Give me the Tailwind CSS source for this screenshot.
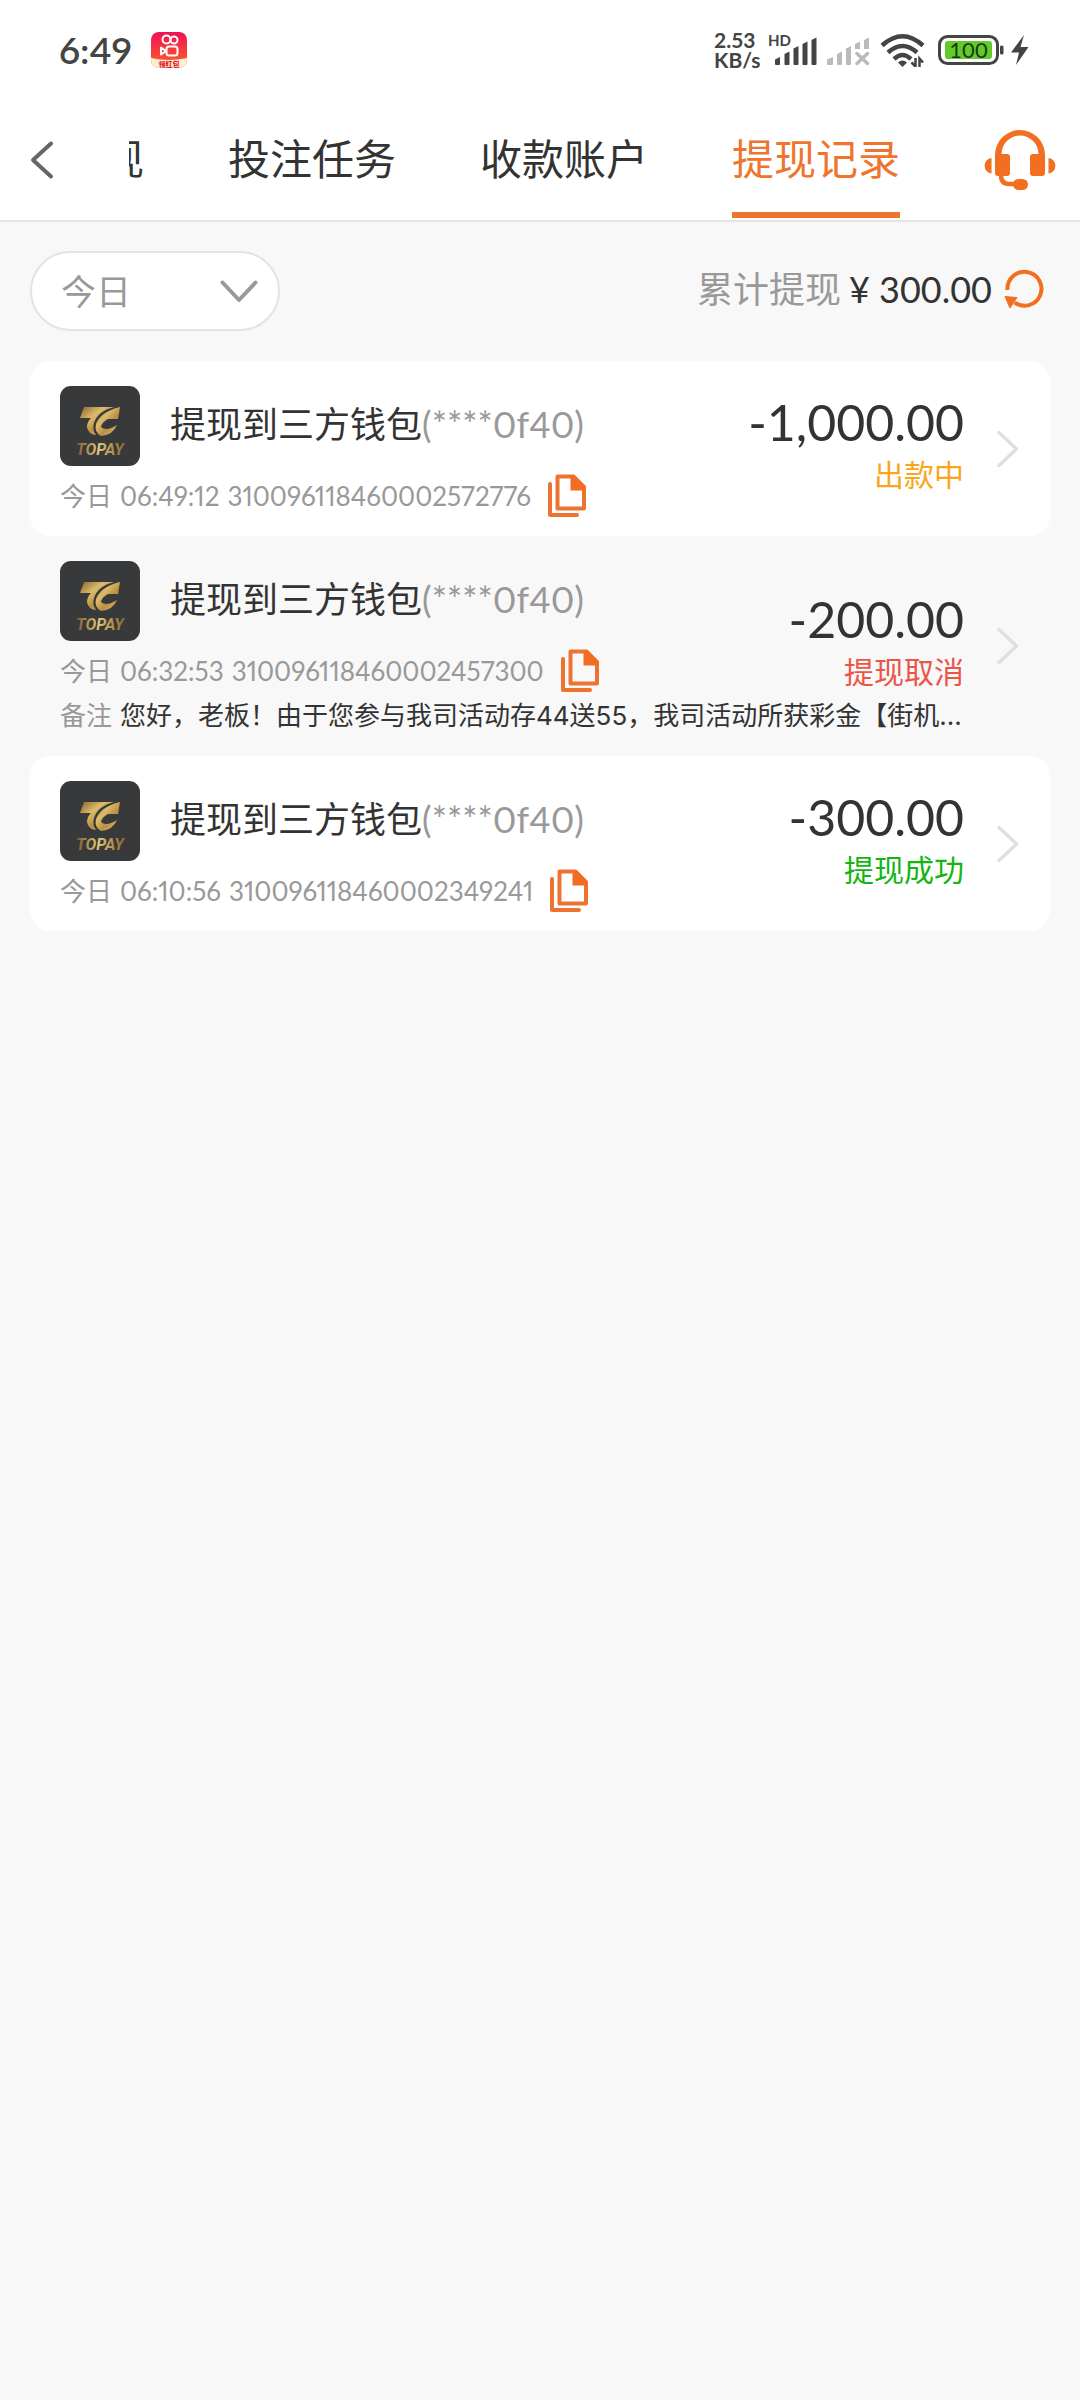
<!DOCTYPE html>
<html lang="zh-CN">
<head>
<meta charset="utf-8">
<meta name="viewport" content="width=device-width, initial-scale=1">
<title>提现记录</title>
<script src="https://cdn.jsdelivr.net/npm/@tailwindcss/browser@4"></script>
</head>
<body class="min-h-screen bg-[#f8f8f8] font-[Lato,'Noto_Sans_CJK_SC',sans-serif] text-[#333]">

<!-- Shared symbols -->
<svg class="absolute h-0 w-0" aria-hidden="true">
  <defs>
    <linearGradient id="gold" x1="0" y1="0" x2="1" y2="1">
      <stop offset="0" stop-color="#8a6428"/><stop offset=".35" stop-color="#dcbc6c"/><stop offset=".6" stop-color="#b98f43"/><stop offset="1" stop-color="#e6c878"/>
    </linearGradient>
    <linearGradient id="goldText" x1="0" y1="0" x2="1" y2="0">
      <stop offset="0" stop-color="#7d5a2c"/><stop offset=".45" stop-color="#e2c476"/><stop offset="1" stop-color="#8a6430"/>
    </linearGradient>
    <linearGradient id="red" x1="0" y1="0" x2="0" y2="1">
      <stop offset="0" stop-color="#ee1156"/><stop offset=".8" stop-color="#fb5430"/>
    </linearGradient>
  </defs>
  <symbol id="copy" viewBox="0 0 40 44">
    <path d="M3 10v31h27" fill="none" stroke="#ec7430" stroke-width="4" stroke-linecap="round" stroke-linejoin="round"/>
    <path d="M10.500 2.500h16l10.500 10.500v21.500h-26.500z" fill="none" stroke="#ec7430" stroke-width="4" stroke-linejoin="round"/>
    <path d="M23.500 1.500h4L38.500 12.500v4h-15z" fill="#f26d21"/>
  </symbol>
  <symbol id="next" viewBox="0 0 24 40">
    <path d="M3 3.500 20.500 20 3 36.500" fill="none" stroke="#dfdfdf" stroke-width="3.500" stroke-linecap="round" stroke-linejoin="round"/>
  </symbol>
</svg>

<header class="bg-white">
  <div class="flex h-[100px] items-center justify-between pr-[50px] pl-[59px]">
    <div class="flex items-center gap-[19px]">
      <span class="text-[37px] leading-[40px] font-semibold text-[#444] proportional-nums">6:49</span>
      <svg class="h-9 w-9" viewBox="0 0 36 36" role="img" aria-label="快手">
        <clipPath id="app"><rect width="36" height="36" rx="8"/></clipPath>
        <g clip-path="url(#app)">
          <rect width="36" height="36" fill="url(#red)"/>
          <path d="M0 26q18 4 36 0v10H0z" fill="#fdeed2"/>
          <text x="18" y="34.500" text-anchor="middle" font-size="7" font-weight="900" fill="#e0202c">领红包</text>
        </g>
        <g fill="none" stroke="#fff" stroke-width="2"><circle cx="15.500" cy="7.500" r="4"/><circle cx="23" cy="8" r="3.500"/><rect x="15.500" y="14.500" width="11" height="9" rx="2.500"/><path d="M15 19l-5-3.500v7z" stroke-linejoin="round"/></g>
      </svg>
    </div>
    <div class="flex items-center text-[#444]">
      <div class="w-[54px] text-[21px] leading-[20px] font-bold"><div>2.53</div><div>KB/s</div></div>
      <svg class="h-8 w-[50px] overflow-visible" viewBox="0 0 50 32" role="img" aria-label="HD 信号">
        <text x="0" y="12" font-size="15" font-weight="700" fill="#444">HD</text>
        <g fill="#444"><path d="M7 30v-4.500l5-2.500v7a1 1 0 0 1-1 1H8a1 1 0 0 1-1-1zM16.500 30V20l5-2.500V30a1 1 0 0 1-1 1h-3a1 1 0 0 1-1-1zM25.500 30V14.500l5-2.500v18a1 1 0 0 1-1 1h-3a1 1 0 0 1-1-1zM34.500 30V10l5-2.500V30a1 1 0 0 1-1 1h-3a1 1 0 0 1-1-1zM43.500 30V6l5-2.500V30a1 1 0 0 1-1 1h-3a1 1 0 0 1-1-1z"/></g>
      </svg>
      <svg class="ml-2 h-8 w-[46px]" viewBox="0 0 46 32" role="img" aria-label="无信号">
        <g fill="#bababa"><path d="M1 30v-4.500l6-2.500v7a1 1 0 0 1-1 1H2a1 1 0 0 1-1-1zM11 30V20l5-2.500V30a1 1 0 0 1-1 1h-3a1 1 0 0 1-1-1zM20 30V14.500l5-2.500v18a1 1 0 0 1-1 1h-3a1 1 0 0 1-1-1zM29 15V10l5-2.500V15zM38 15V6l5-2.500V15z"/></g>
        <path d="M31 19.500l10.500 10M41.500 19.500 31 29.500" stroke="#bababa" stroke-width="3.500" stroke-linecap="round"/>
      </svg>
      <svg class="ml-2 h-[34px] w-[46px]" viewBox="0 0 46 34" role="img" aria-label="Wi-Fi">
        <g fill="none" stroke="#444" stroke-width="4.500"><path d="M2 12.500Q22.500-6 43 12.500"/><path d="M8 19.500q14.500-13 29 0"/><path d="M14 26q8.500-8 17 0"/></g>
        <path d="M18 29.500q4.500-4 9 0l-4.500 4.500z" fill="#444"/>
        <path d="M35.500 25v8.500l-4-4M39.500 34V25.500l3.500 4" fill="none" stroke="#444" stroke-width="2.500"/>
      </svg>
      <svg class="ml-3 h-[30px] w-[92px]" viewBox="0 0 92 30" role="img" aria-label="电量 100，充电中">
        <rect x="1.500" y="1.500" width="58" height="27" rx="8" fill="none" stroke="#444" stroke-width="3"/>
        <rect x="7" y="6" width="47" height="18" rx="3" fill="#62cb2b"/>
        <rect x="62" y="10.500" width="3.500" height="9" rx="1.500" fill="#444"/>
        <text x="30.500" y="23" text-anchor="middle" font-size="22" fill="#1d3b12">100</text>
        <path d="M86 0 73 17.500h8L78 30 90.500 12h-8z" fill="#444"/>
      </svg>
    </div>
  </div>

  <div class="flex h-[122px] items-center border-b-2 border-[#e4e4e4] pr-6">
    <button type="button" class="flex h-full w-[129px] shrink-0 items-center pl-[30px]" aria-label="返回">
      <svg class="h-10 w-6" viewBox="0 0 24 40"><path d="M21 3.500 3 20l18 16.500" fill="none" stroke="#666" stroke-width="4" stroke-linecap="round" stroke-linejoin="round"/></svg>
    </button>
    <nav class="flex min-w-0 flex-1 justify-end gap-[84px] overflow-hidden text-[42px]">
      <a href="#" class="flex h-[116px] shrink-0 items-center border-b-6 border-transparent pt-1">提现</a>
      <a href="#" class="flex h-[116px] shrink-0 items-center border-b-6 border-transparent pt-1">投注任务</a>
      <a href="#" class="flex h-[116px] shrink-0 items-center border-b-6 border-transparent pt-1">收款账户</a>
      <a href="#" aria-current="page" class="flex h-[116px] shrink-0 items-center border-b-6 border-[#ee752d] pt-1 text-[#ee752d]">提现记录</a>
    </nav>
    <button type="button" class="ml-[84px] shrink-0" aria-label="客服">
      <svg class="h-[62px] w-[72px]" viewBox="0 0 72 62" fill="#f26f21">
        <path d="M11 26a25 25 0 0 1 50 0v18a3 3 0 0 1-3 3H49a3 3 0 0 1-3-3V28a3 3 0 0 1 3-3h5.500a18.500 18.500 0 0 0-37 0H23a3 3 0 0 1 3 3v16a3 3 0 0 1-3 3H14a3 3 0 0 1-3-3z"/>
        <path d="M7.500 29v15.500a7.800 7.800 0 0 1 0-15.500zM64.500 29v15.500a7.800 7.800 0 0 0 0-15.500z"/>
        <path d="M17 46q0 9 8 9h8" fill="none" stroke="#f26f21" stroke-width="4.500"/>
        <rect x="29" y="50" width="15" height="11" rx="5.500"/>
      </svg>
    </button>
  </div>
</header>

<main class="px-[30px] pt-[29px]">
  <div class="mb-[30px] flex items-center justify-between">
    <div class="relative">
      <select aria-label="日期" class="block h-20 w-[250px] appearance-none rounded-full border-2 border-[#e3e3e3] bg-white pl-[29px] text-[35px] text-[#999]">
        <option>今日</option>
      </select>
      <svg class="pointer-events-none absolute top-7 right-[21px] h-6 w-10" viewBox="0 0 40 24"><path d="M3.500 3.500 20 21 36.500 3.500" fill="none" stroke="#999" stroke-width="4" stroke-linecap="round" stroke-linejoin="round"/></svg>
    </div>
    <div class="flex items-center pb-1 text-[36px] leading-[40px]">
      <span class="text-[#999]">累计提现</span>
      <span class="ml-2">¥ 300.00</span>
      <button type="button" class="mr-[6px] ml-3" aria-label="刷新">
        <svg class="block h-10 w-10" viewBox="0 0 40 40"><path d="M3.500 21a17 17 0 1 1 7 12.500" fill="none" stroke="#f26f21" stroke-width="4"/><path d="M1 27.500 13 28.500 6 39z" fill="#f26f21" stroke="#f26f21" stroke-linejoin="round"/></svg>
      </button>
    </div>
  </div>

  <ul id="records"></ul>
</main>

<template id="record">
  <li>
    <a href="#" class="grid grid-cols-[1fr_auto_auto] grid-rows-[auto_auto] rounded-[20px] px-[30px]">
      <div class="min-w-0 pt-[25px]">
        <div class="mb-2 flex items-center gap-[30px]">
          <svg class="h-20 w-20 shrink-0" viewBox="0 0 80 80" role="img" aria-label="TOPAY">
            <rect width="80" height="80" rx="11" fill="#37393a"/>
            <path d="M24 21H54Q38 25 34 37 32 44 36 49 28 48 27 41 27 36 31 32H20z" fill="url(#gold)"/>
            <path d="M60 21 58 33H48Q42 36 41 41 46 46 57 39 53 49 41 50 34 46 36 38 40 26 60 21z" fill="url(#gold)"/>
            <text x="40" y="69" text-anchor="middle" font-family="'Liberation Sans Narrow', Roboto, sans-serif" font-size="16" font-style="italic" font-weight="700" fill="url(#goldText)">TOPAY</text>
          </svg>
          <div class="pb-1 text-[36px] leading-[44px] whitespace-nowrap proportional-nums">提现到三方钱包<span class="text-[#999]">(****0f40)</span></div>
        </div>
        <div class="flex items-center gap-2 text-[26px] leading-[44px] whitespace-nowrap text-[#999] proportional-nums">
          <span>今日</span>
          <span data-f="time"></span>
          <span data-f="no"></span>
          <svg class="ml-2 h-11 w-10 shrink-0"><use href="#copy"/></svg>
        </div>
      </div>
      <p class="col-span-2 col-start-1 row-start-2 w-0 pb-[18px] font-[Inter,'Noto_Sans_CJK_SC',sans-serif] text-[26px] leading-[45px] whitespace-nowrap" data-f="note"></p>
      <div class="col-start-2 row-span-2 row-start-1 self-center text-right">
        <div class="text-[50px] leading-[50px]" data-f="amount"></div>
        <div class="text-[30px] leading-[54px]" data-f="status"></div>
      </div>
      <svg class="col-start-3 row-span-2 row-start-1 ml-8 h-10 w-6 self-center"><use href="#next"/></svg>
    </a>
  </li>
</template>

<script>
  // Withdrawal records, newest first
  const records = [
    { time: '06:49:12', no: '310096118460002572776', amount: '-1,000.00', status: '出款中', color: 'text-[#f9a61a]', bg: 'bg-white' },
    { time: '06:32:53', no: '310096118460002457300', amount: '-200.00', status: '提现取消', color: 'text-[#ea5548]', bg: 'bg-transparent', note: '您好，老板！由于您参与我司活动存44送55，我司活动所获彩金【街机...' },
    { time: '06:10:56', no: '310096118460002349241', amount: '-300.00', status: '提现成功', color: 'text-[#12b512]', bg: 'bg-white' },
  ];
  const list = document.getElementById('records');
  const tpl = document.getElementById('record');
  for (const r of records) {
    const item = tpl.content.cloneNode(true);
    const field = name => item.querySelector(`[data-f=${name}]`);
    item.querySelector('a').classList.add(r.bg);
    field('time').textContent = r.time;
    field('no').textContent = r.no;
    field('amount').textContent = r.amount;
    field('status').textContent = r.status;
    field('status').classList.add(r.color);
    if (r.note) {
      field('note').innerHTML = '<span class="mr-2 text-[#999]">备注</span>' + r.note;
    }
    list.append(item);
  }
</script>
</body>
</html>
